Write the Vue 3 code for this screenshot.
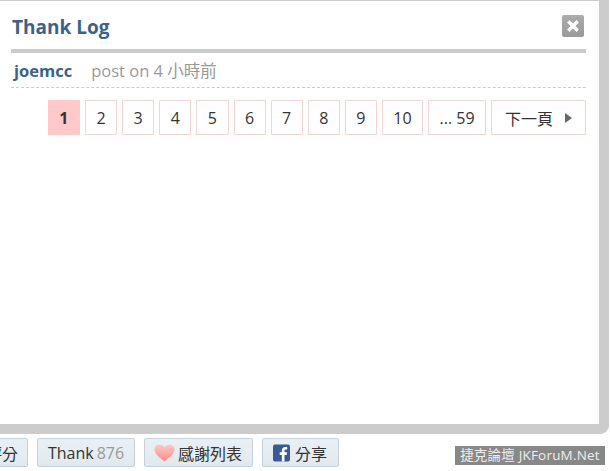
<template>
  <div class="page">
    <div class="panel">
      <div class="head">
        <h3 class="title">Thank Log</h3>
        <span class="close">
          <svg width="14" height="14" viewBox="0 0 14 14">
            <path d="M3.500 3.500 L10.500 10.500 M10.500 3.500 L3.500 10.500" stroke="#fff" stroke-width="3.400" stroke-linecap="square" />
          </svg>
        </span>
      </div>
      <div class="log-row">
        <span class="user">joemcc</span>
        <span class="meta">post on 4 小時前</span>
      </div>
      <div class="pager">
        <a v-for="p in pages" :key="p" class="pg" :class="{ cur: p === '1' }">{{ p }}</a>
        <a class="pg next">下一頁<i class="arrow"></i></a>
      </div>
    </div>
    <div class="footer">
      <div class="btns">
        <a class="btn first">評分</a>
        <a class="btn thank">Thank<span class="num">876</span></a>
        <a class="btn love">
          <svg width="21" height="18" viewBox="0 0 21 18">
            <defs>
              <linearGradient id="hg" x1="0" y1="0" x2="0" y2="1">
                <stop offset="0" stop-color="#ffc9c6" />
                <stop offset="1" stop-color="#fb8a88" />
              </linearGradient>
            </defs>
            <path d="M10.500 17.500 C7 14.500 .5 10.500 .5 5.500 C.5 2.500 3 .5 5.500 .5 C7.500 .5 9.500 1.500 10.500 3.500 C11.500 1.500 13.500 .5 15.500 .5 C18 .5 20.500 2.500 20.500 5.500 C20.500 10.500 14 14.500 10.500 17.500 Z" fill="url(#hg)" />
          </svg>
          感謝列表
        </a>
        <a class="btn share">
          <svg width="17" height="18" viewBox="0 0 18 18">
            <rect width="18" height="18" rx="2" fill="#3b5998" />
            <path d="M12.200 18 V11 H14.500 L14.900 8.200 H12.200 V6.500 C12.200 5.700 12.500 5.200 13.600 5.200 H15 V2.700 C14.700 2.700 13.900 2.600 12.900 2.600 C10.800 2.600 9.400 3.900 9.400 6.200 V8.200 H7.100 V11 H9.400 V18 Z" fill="#fff" />
          </svg>
          分享
        </a>
      </div>
      <div class="mark">捷克論壇 JKForuM.Net</div>
    </div>
  </div>
</template>

<script setup>
const pages = ['1', '2', '3', '4', '5', '6', '7', '8', '9', '10', '... 59']
</script>

<style>
html, body {
  margin: 0;
  background: #fff;
  overflow: hidden;
}
</style>

<style scoped>
.page {
  width: 610px;
  height: 471px;
  overflow: hidden;
  font-family: "Open Sans", "Noto Sans CJK TC", sans-serif;
}
.panel {
  box-sizing: border-box;
  width: 609px;
  height: 434px;
  padding: 0 13px 0 11px;
  background: #fff;
  border-top: 1px solid #ccc;
  border-right: 10px solid #ccc;
  border-bottom: 10px solid #ccc;
  border-bottom-right-radius: 9px;
}
.head {
  display: flex;
  justify-content: space-between;
  align-items: center;
  height: 48px;
  border-bottom: 4px solid #ccc;
}
.title {
  margin: 4px 0 0 1px;
  font-size: 19px;
  font-weight: 700;
  color: #3a628a;
}
.close {
  display: flex;
  align-items: center;
  justify-content: center;
  width: 22px;
  height: 22px;
  margin-top: 2px;
  margin-right: 2px;
  border-radius: 2px;
  background: linear-gradient(#adadad, #999);
}
.log-row {
  display: flex;
  align-items: center;
  gap: 19px;
  height: 34px;
  padding-left: 3px;
  border-bottom: 1px dashed #ccc;
  font-size: 16.500px;
}
.user {
  font-weight: 700;
  color: #3a628a;
}
.meta {
  color: #999;
}
.pager {
  display: flex;
  justify-content: flex-end;
  gap: 5px;
  margin-top: 12px;
}
.pg {
  box-sizing: border-box;
  display: flex;
  align-items: center;
  justify-content: center;
  width: 32.125px;
  height: 35px;
  border: 1px solid #f2d5d5;
  font-size: 16px;
  color: #333;
}
.pg:nth-child(10) {
  width: 41px;
}
.pg:nth-child(11) {
  width: 58px;
}
.pg.cur {
  background: #ffc9c9;
  border-color: #ffc9c9;
  font-weight: 700;
}
.pg.next {
  width: 95px;
  justify-content: flex-start;
  padding-left: 13px;
}
.arrow {
  margin-left: 12px;
  border-left: 7px solid #666;
  border-top: 5px solid transparent;
  border-bottom: 5px solid transparent;
}
.footer {
  position: relative;
  height: 37px;
}
.btns {
  display: flex;
  gap: 9px;
  margin-left: -13px;
  padding-top: 4px;
}
.btn {
  box-sizing: border-box;
  display: flex;
  align-items: center;
  height: 29px;
  padding: 0 9px;
  gap: 3px;
  background: linear-gradient(#e9f0f5, #e1e9ef);
  border: 1px solid #c5d2dc;
  border-radius: 2px;
  font-size: 16px;
  color: #333;
  white-space: nowrap;
}
.first {
  width: 41px;
  padding: 0;
  justify-content: flex-end;
  padding-right: 9px;
}
.thank {
  width: 98px;
  justify-content: center;
  padding: 0;
}
.num {
  color: #999;
}
.love {
  width: 109px;
  padding-right: 0;
}
.share {
  width: 77px;
  padding-left: 10px;
  gap: 5px;
}
.mark {
  position: absolute;
  left: 455px;
  top: 12px;
  width: 150px;
  height: 19px;
  line-height: 19px;
  background: #888;
  color: #eee;
  font-size: 13.500px;
  letter-spacing: 0.2px;
  text-align: center;
  white-space: nowrap;
}
</style>
